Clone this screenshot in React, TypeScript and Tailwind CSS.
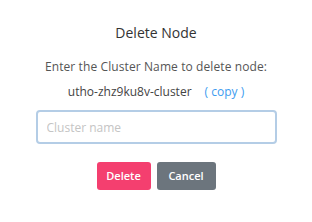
import React from 'react';

const App: React.FC = () => {
  return (
    <div className="w-[312px] h-[222px] bg-white flex flex-col items-center font-['Open_Sans',sans-serif]">
      <h2 className="mt-[24px] text-[14px] leading-[18px] font-medium text-[#333333]">Delete Node</h2>
      <p className="mt-[17px] text-[12px] leading-[16px] tracking-[0.1px] text-[#555555]">Enter the Cluster Name to delete node:</p>
      <div className="mt-[9px] flex items-center text-[12px] leading-[16px]">
        <span className="text-[#444444]">utho-zhz9ku8v-cluster</span>
        <span className="ml-[13px] text-[#3d9cf0]">( copy )</span>
      </div>
      <input
        autoFocus
        placeholder="Cluster name"
        className="mt-[10px] w-[241px] h-[34px] rounded-[4px] border-[2px] border-[#b4cde6] px-[9px] text-[12px] text-[#444] placeholder:text-[#c4c4c4] outline-none"
      />
      <div className="mt-[18px] flex gap-[6px]">
        <button className="w-[54px] h-[28px] rounded-[3px] bg-[#f43f6f] text-white text-[11px] font-semibold">Delete</button>
        <button className="w-[59px] h-[28px] rounded-[3px] bg-[#6c757d] text-white text-[11px] font-semibold">Cancel</button>
      </div>
    </div>
  );
};

export default App;
